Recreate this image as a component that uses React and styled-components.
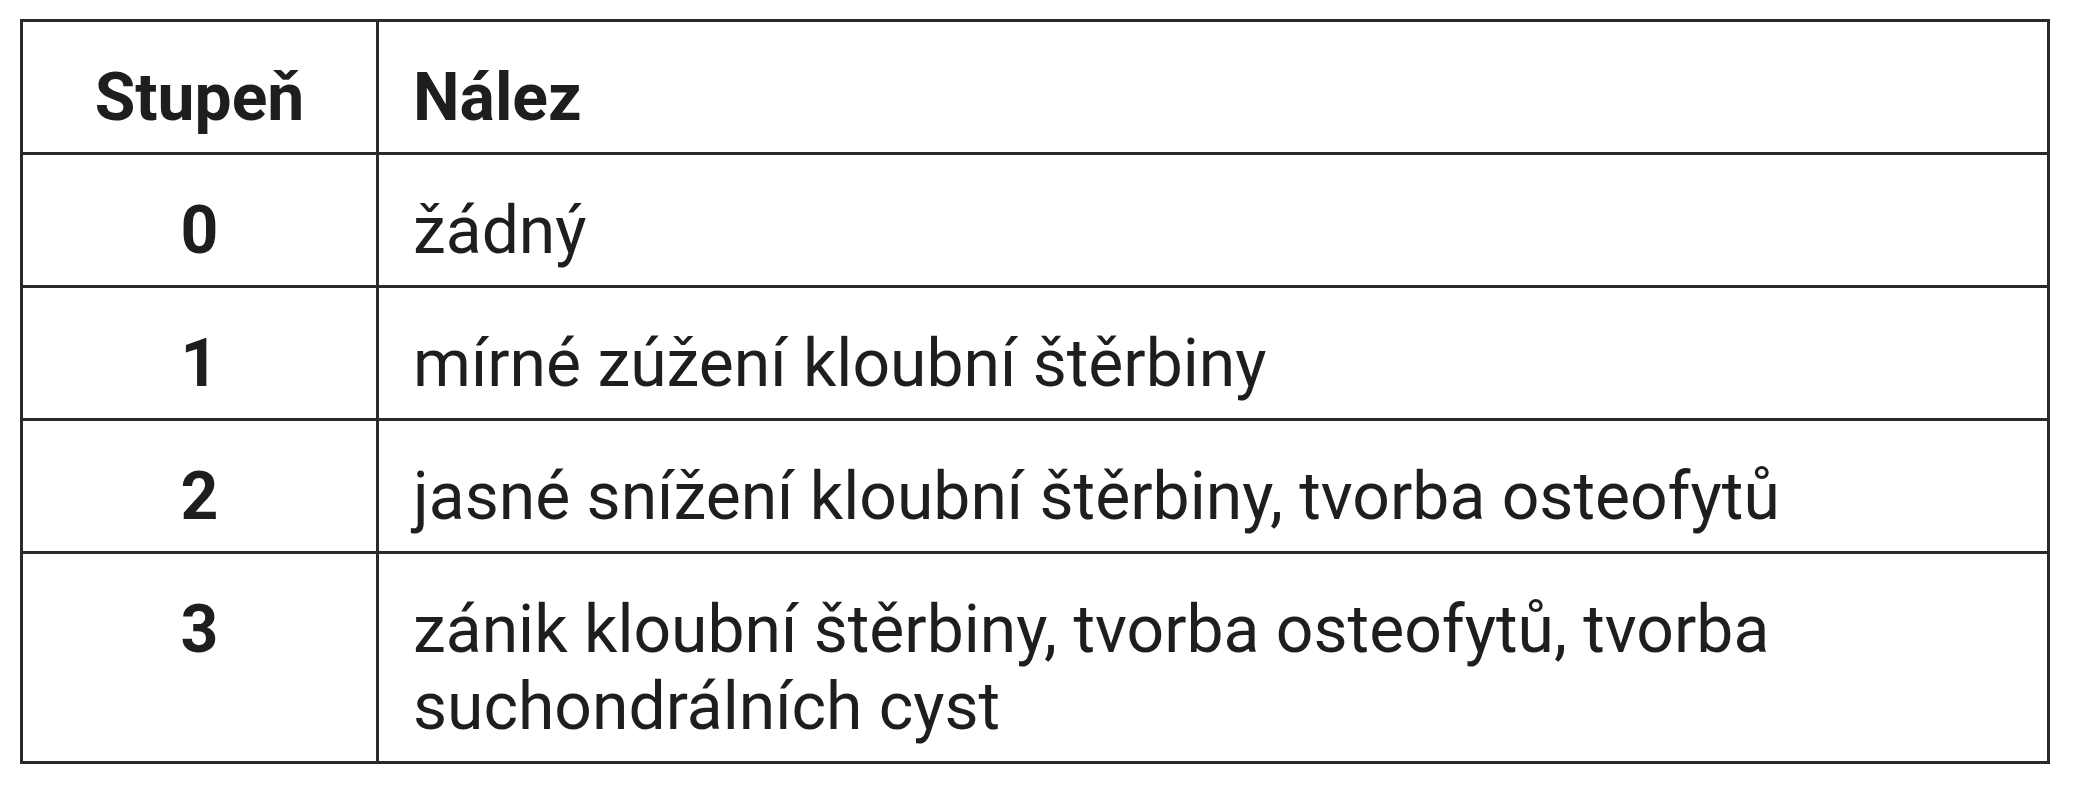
import React from "react";
import styled, { createGlobalStyle } from "styled-components";

const GlobalStyle = createGlobalStyle`
  body {
    margin: 0;
    background: #ffffff;
    font-family: Roboto, "Liberation Sans", sans-serif;
  }
`;

const rows = [
  { grade: "0", text: "žádný" },
  { grade: "1", text: "mírné zúžení kloubní štěrbiny" },
  { grade: "2", text: "jasné snížení kloubní štěrbiny, tvorba osteofytů" },
  {
    grade: "3",
    text: "zánik kloubní štěrbiny, tvorba osteofytů, tvorba suchondrálních cyst",
  },
];

const App = () => {
  return (
    <Wrapper>
      <GlobalStyle />
      <Table>
        <thead>
          <tr>
            <HeadCell $center>Stupeň</HeadCell>
            <HeadCell>Nález</HeadCell>
          </tr>
        </thead>
        <tbody>
          {rows.map((row) => (
            <tr key={row.grade}>
              <GradeCell>{row.grade}</GradeCell>
              <TextCell>{row.text}</TextCell>
            </tr>
          ))}
        </tbody>
      </Table>
    </Wrapper>
  );
};

const Wrapper = styled.div`
  padding: 19px 20px;
`;

const Table = styled.table`
  width: 2030px;
  border-collapse: collapse;
  table-layout: fixed;
  color: #1e1e1e;
  font-family: Roboto, "Liberation Sans", sans-serif;
  font-size: 66px;
  line-height: 77px;
  border: 3px solid #2a2a2a;
`;

const Cell = styled.td`
  border: 3px solid #2a2a2a;
  vertical-align: top;
  padding: 37px 34px 16px;
`;

const HeadCell = styled.th`
  border: 3px solid #2a2a2a;
  vertical-align: top;
  padding: 37px 34px 16px;
  font-weight: 700;
  text-align: ${(p) => (p.$center ? "center" : "left")};
  &:first-child {
    width: 356px;
    box-sizing: border-box;
  }
`;

const GradeCell = styled(Cell)`
  text-align: center;
  font-weight: 700;
`;

const TextCell = styled(Cell)`
  text-align: left;
  padding-right: 120px;
`;

export default App;
